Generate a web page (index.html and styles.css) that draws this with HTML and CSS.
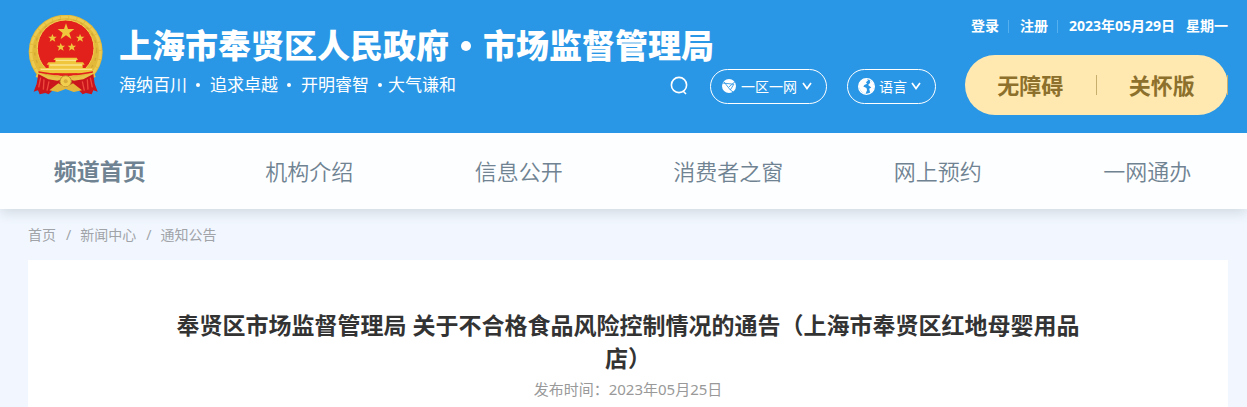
FILE: index.html
```html
<!DOCTYPE html>
<html lang="zh-CN">
<head>
<meta charset="utf-8">
<meta name="viewport" content="width=device-width, initial-scale=1">
<title>上海市奉贤区人民政府</title>
<link rel="stylesheet" href="styles.css">
</head>
<body>
<header class="header">
  <svg class="emblem" viewBox="0 0 225 240" aria-hidden="true">
    <circle cx="113" cy="110" r="111" fill="#e3b93a"/>
    <circle cx="113" cy="110" r="104" fill="none" stroke="#edcb50" stroke-width="8" stroke-dasharray="22 3"/>
    <circle cx="113" cy="106" r="93" fill="none" stroke="#d3a733" stroke-width="4" stroke-dasharray="9 14"/>
    <circle cx="113" cy="100" r="85" fill="#e3211c" stroke="#f2d052" stroke-width="3"/>
    <g fill="#f0c63c">
      <path d="M114 25l6 17h19l-15 12 6 18-16-11-16 11 6-18-15-12h19z"/>
      <path d="M73 57l4 8h9l-7 6 3 9-9-5-8 5 3-9-7-6h9z"/>
      <path d="M156 57l4 8h9l-7 6 3 9-9-5-8 5 3-9-7-6h9z"/>
      <path d="M98 84l4 8h9l-7 6 3 9-9-5-8 5 3-9-7-6h9z"/>
      <path d="M131 84l4 8h9l-7 6 3 9-9-5-8 5 3-9-7-6h9z"/>
      <path d="M82 128h64l4 7h-6v7h21l5 7h-6v10h30v16H35v-16h27v-10h-6l5-7h21v-7h-6z"/>
    </g>
    <path d="M84 136h61M65 150h97M38 163h154" stroke="#fae38a" stroke-width="4"/>
    <path d="M31 171q84 17 164 0" stroke="#e3211c" stroke-width="5" fill="none"/>
    <path d="M28 172q85 34 170 0l5 14q-88 35-180 0z" fill="#e9c347"/>
    <path d="M31 177l30 16 27 4 25-8 25 8 28-4 30-16 4 29 9 24-13-4-5 12-17-4-10 4-18-18-33-12-33 12-18 18-10-4-17 4-5-12-13 4 9-24z" fill="#c9151b"/>
    <path d="M38 188l-6 29M48 193l-2 31M63 199l-6 28M187 188l6 29M178 193l2 31M163 199l6 28" stroke="#ee4a3d" stroke-width="4"/>
    <circle cx="113" cy="199" r="17" fill="#f1ce4e" stroke="#b98a2a" stroke-width="3"/>
    <circle cx="113" cy="199" r="6" fill="#d9ab37"/>
    <path d="M64 226l27-21 22 13 22-13 27 21-25 5-24-9-24 9z" fill="#e2b73b"/>
  </svg>
  <div class="header-main">
    <div class="header-top">
      <h1 class="site-name">上海市奉贤区人民政府<span class="dot"></span>市场监督管理局</h1>
      <div class="account">
        <a href="#">登录</a>
        <a href="#">注册</a>
        <span>2023年05月29日</span>
        <span class="weekday">星期一</span>
      </div>
    </div>
    <div class="header-bottom">
      <p class="slogan"><span>海纳百川</span><i></i><span>追求卓越</span><i></i><span>开明睿智</span><i class="tight"></i><span>大气谦和</span></p>
      <div class="tools">
        <button class="search" type="button" aria-label="搜索">
          <svg viewBox="0 0 18 20" width="18" height="20" fill="none" stroke="#fff" stroke-width="1.6"><circle cx="9" cy="10" r="7.6"/><path d="M13 16l3 3"/></svg>
        </button>
        <button class="pill" type="button">
          <svg viewBox="0 0 16 16" width="14" height="14"><circle cx="8" cy="8" r="8" fill="#fff"/><path d="M0 4.500L13.500 6 9.500 12.500 2 3M15 3L8 9M9.500 12.500L13 15" fill="none" stroke="#2a97e6" stroke-width="1"/></svg>
          <span>一区一网</span>
          <svg viewBox="0 0 10 8" width="10" height="8" fill="none" stroke="#fff" stroke-width="1.700"><path d="M1 1l4 5.500 4-5.500"/></svg>
        </button>
        <button class="pill language" type="button">
          <svg viewBox="0 0 16 16" width="17" height="17"><circle cx="8" cy="8" r="7.400" fill="#2a97e6" stroke="#fff" stroke-width="1.200"/><path d="M1 5Q3 1 8 .8L9.500 2 7.500 4 8.500 5.500 6 6.500 5 8l3 1.500.5 2L7 15Q3 14 1 9zM11 2l3 2 1.500 4-1.500 4-2.500 2L10.500 10l2-1-3-2.500 2-2z" fill="#fff"/></svg>
          <span>语言</span>
          <svg viewBox="0 0 10 8" width="10" height="8" fill="none" stroke="#fff" stroke-width="1.700"><path d="M1 1l4 5.500 4-5.500"/></svg>
        </button>
        <div class="access">
          <a href="#">无障碍</a>
          <a href="#">关怀版</a>
        </div>
      </div>
    </div>
  </div>
</header>
<nav class="nav">
  <ul>
    <li><a class="current" href="#">频道首页</a></li>
    <li><a href="#">机构介绍</a></li>
    <li><a href="#">信息公开</a></li>
    <li><a href="#">消费者之窗</a></li>
    <li><a href="#">网上预约</a></li>
    <li><a href="#">一网通办</a></li>
  </ul>
</nav>
<div class="crumbs"><a href="#">首页</a><span>/</span><a href="#">新闻中心</a><span>/</span><a href="#">通知公告</a></div>
<main class="article">
  <h2>奉贤区市场监督管理局 关于不合格食品风险控制情况的通告（上海市奉贤区红地母婴用品店）</h2>
  <p class="published">发布时间：2023年05月25日</p>
</main>
</body>
</html>
```
FILE: styles.css
```css
* { box-sizing: border-box; }
body {
  margin: 0;
  min-height: 100vh;
  display: flex;
  flex-direction: column;
  background: #f2f7ff;
  font-family: "Noto Sans", "Noto Sans CJK SC", sans-serif;
}
a { color: inherit; text-decoration: none; }
h1, h2, p, ul { margin: 0; padding: 0; }
button { font: inherit; color: inherit; background: none; border: 0; padding: 0; }
svg { flex: none; }

.header {
  position: relative;
  z-index: 1;
  display: flex;
  gap: 16px;
  padding: 0 19px 18px 28px;
  background: #2a97e6;
  color: #fff;
}
.emblem { width: 75px; height: 80px; margin-top: 15px; }
.header-main { flex: 1; min-width: 0; }
.header-top {
  display: flex;
  justify-content: space-between;
  align-items: flex-end;
  height: 55px;
}
.site-name {
  display: flex;
  align-items: center;
  font-size: 33px;
  line-height: 18px;
  font-weight: 900;
  white-space: nowrap;
}
.dot {
  width: 10px;
  height: 10px;
  margin: 0 12px;
  border-radius: 50%;
  background: #fff;
}
.account {
  display: flex;
  align-self: flex-start;
  margin-top: 16px;
  font-size: 14px;
  line-height: 20px;
  font-weight: 700;
  white-space: nowrap;
}
.account a { display: flex; align-items: center; }
.account a::after {
  content: "";
  height: 13px;
  margin: 0 11px 0 9px;
  border-left: 1px solid #55b0f0;
}
.weekday { margin-left: 11px; }
.header-bottom {
  display: flex;
  justify-content: space-between;
  align-items: center;
}
.slogan {
  display: flex;
  align-items: center;
  font-size: 17px;
  line-height: 24px;
  white-space: nowrap;
}
.slogan i {
  width: 4px;
  height: 4px;
  margin: 0 10px 0 9px;
  border-radius: 50%;
  background: #fff;
}
.slogan .tight { margin-right: 6px; }
.tools { display: flex; align-items: center; gap: 20px; white-space: nowrap; }
.search { height: 20px; margin-right: 2px; }
.pill {
  display: flex;
  align-items: center;
  gap: 5px;
  height: 35px;
  margin-top: 2px;
  padding: 0 14px 0 11px;
  border: 1px solid #fff;
  border-radius: 18px;
  font-size: 14px;
}
.language { gap: 4px; padding: 0 14px 0 10px; }
.access {
  display: flex;
  align-items: center;
  width: 263px;
  height: 60px;
  margin-left: 9px;
  border-radius: 30px;
  background: #ffe9b1;
  color: #8c702c;
  font-size: 22px;
  font-weight: 700;
}
.access a {
  flex: 1;
  border-right: 1px solid #c8ae6c;
  text-align: center;
  line-height: 20px;
}

.nav {
  overflow: hidden;
  background: #fdfeff;
  box-shadow: 0 4px 12px #d0d9e1;
}
.nav ul {
  display: grid;
  grid-template-columns: repeat(6, 1fr);
  margin: 0 -5px;
  list-style: none;
  text-align: center;
  font-size: 22px;
  font-weight: 350;
  line-height: 76px;
  color: #6f8392;
}
.nav .current { font-size: 23px; font-weight: 700; }

.crumbs {
  display: flex;
  padding: 16px 28px 15px;
  font-size: 14px;
  line-height: 20px;
  color: #a0a3a8;
}
.crumbs span { margin: 0 9px 0 10px; }

.article {
  flex: 1;
  margin: 0 19px 0 28px;
  padding: 49px 140px 0;
  background: #fff;
  text-align: center;
}
.article h2 {
  font-size: 23px;
  line-height: 33px;
  font-weight: 700;
  color: #333;
}
.published {
  margin-top: 4px;
  font-size: 15px;
  line-height: 20px;
  color: #999;
}
```
